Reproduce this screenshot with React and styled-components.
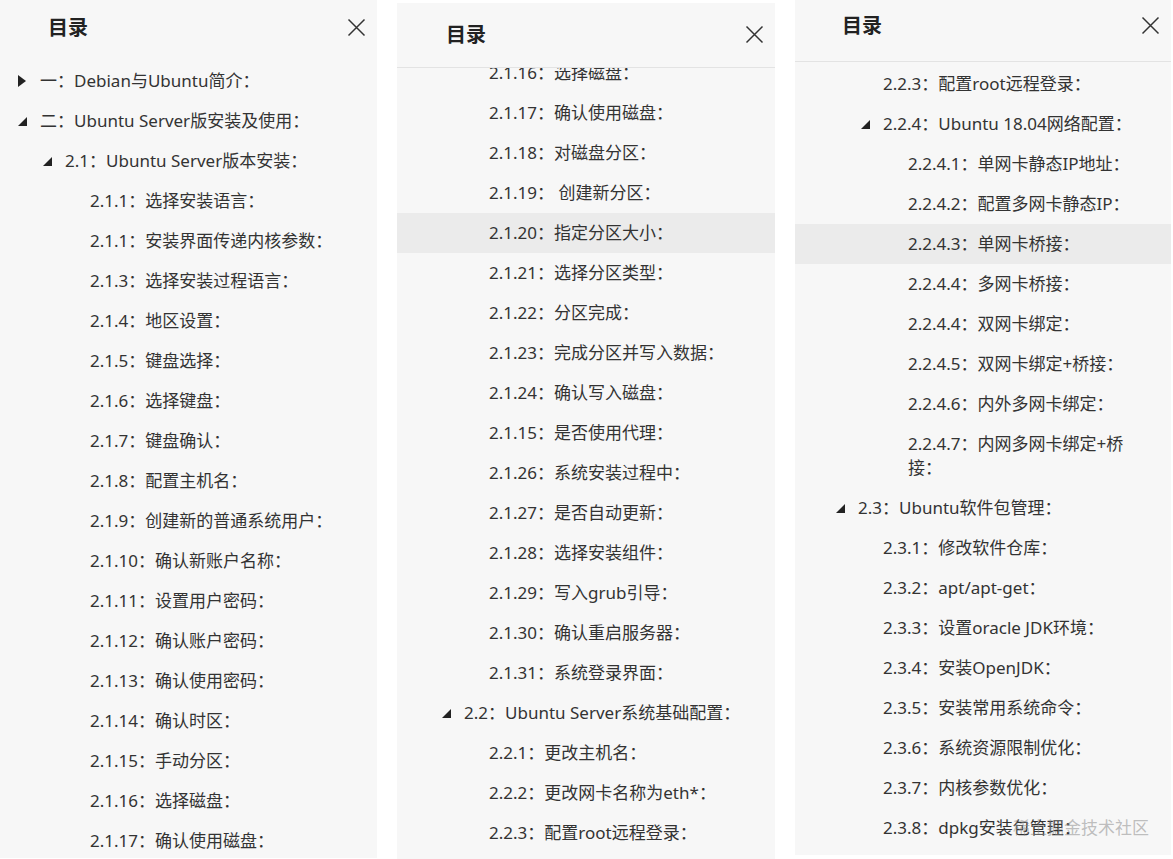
import React, { useLayoutEffect, useRef } from 'react'
import styled, { createGlobalStyle } from 'styled-components'

const GlobalStyle = createGlobalStyle`
  html, body {
    margin: 0;
    padding: 0;
    background: #ffffff;
  }
  body {
    font-family: 'Noto Sans', 'Noto Sans CJK SC', sans-serif;
    color: #333;
  }
`

const Page = styled.div`
  display: flex;
  align-items: flex-start;
  gap: 20px;
  width: 1173px;
  height: 859px;
  overflow: hidden;
`

const Panel = styled.div`
  position: relative;
  display: flex;
  flex-direction: column;
  flex: none;
  width: ${p => p.$width}px;
  height: ${p => p.$height}px;
  margin-top: ${p => p.$top}px;
  background: #f7f7f7;
  overflow: hidden;
`

const Header = styled.div`
  flex: none;
  display: flex;
  align-items: center;
  justify-content: space-between;
  box-sizing: border-box;
  height: ${p => p.$height}px;
  padding: 0 9px 0 ${p => p.$titleLeft}px;
  border-bottom: 1px solid ${p => (p.$divider ? '#e3e3e3' : 'transparent')};
`

const Title = styled.h2`
  margin: 0;
  margin-top: ${p => p.$shift}px;
  font-family: 'Noto Sans CJK SC', sans-serif;
  font-size: 20px;
  font-weight: 700;
  color: #222;
`

const CloseButton = styled.button`
  display: flex;
  align-items: center;
  justify-content: center;
  width: 24px;
  height: 24px;
  margin-top: ${p => p.$shift}px;
  padding: 0;
  border: none;
  background: none;
  cursor: pointer;
`

const List = styled.ul`
  flex: 1;
  margin: 0;
  padding: 0 0 60px 0;
  list-style: none;
  overflow: hidden;
`

const Row = styled.li`
  position: relative;
  display: flex;
  box-sizing: border-box;
  min-height: 40px;
  padding: 8px 30px 8px ${p => p.$indent}px;
  font-size: 17px;
  line-height: 24px;
  color: #333;
  background: ${p => (p.$active ? '#ebebeb' : 'transparent')};
`

const Toggle = styled.span`
  position: absolute;
  left: ${p => p.$indent - 23}px;
  top: 13px;
  width: 10px;
  height: 14px;
  display: flex;
  align-items: center;
  justify-content: center;
`

const Watermark = styled.div`
  position: absolute;
  right: 22px;
  bottom: 16px;
  font-family: 'Noto Sans CJK SC', sans-serif;
  font-size: 17px;
  color: rgba(140, 140, 140, 0.55);
  pointer-events: none;
`

const toc = [
  { lv: 1, t: '一：Debian与Ubuntu简介：', open: false },
  { lv: 1, t: '二：Ubuntu Server版安装及使用：', open: true },
  { lv: 2, t: '2.1：Ubuntu Server版本安装：', open: true },
  { lv: 3, t: '2.1.1：选择安装语言：' },
  { lv: 3, t: '2.1.1：安装界面传递内核参数：' },
  { lv: 3, t: '2.1.3：选择安装过程语言：' },
  { lv: 3, t: '2.1.4：地区设置：' },
  { lv: 3, t: '2.1.5：键盘选择：' },
  { lv: 3, t: '2.1.6：选择键盘：' },
  { lv: 3, t: '2.1.7：键盘确认：' },
  { lv: 3, t: '2.1.8：配置主机名：' },
  { lv: 3, t: '2.1.9：创建新的普通系统用户：' },
  { lv: 3, t: '2.1.10：确认新账户名称：' },
  { lv: 3, t: '2.1.11：设置用户密码：' },
  { lv: 3, t: '2.1.12：确认账户密码：' },
  { lv: 3, t: '2.1.13：确认使用密码：' },
  { lv: 3, t: '2.1.14：确认时区：' },
  { lv: 3, t: '2.1.15：手动分区：' },
  { lv: 3, t: '2.1.16：选择磁盘：' },
  { lv: 3, t: '2.1.17：确认使用磁盘：' },
  { lv: 3, t: '2.1.18：对磁盘分区：' },
  { lv: 3, t: '2.1.19： 创建新分区：' },
  { lv: 3, t: '2.1.20：指定分区大小：', id: 'p2' },
  { lv: 3, t: '2.1.21：选择分区类型：' },
  { lv: 3, t: '2.1.22：分区完成：' },
  { lv: 3, t: '2.1.23：完成分区并写入数据：' },
  { lv: 3, t: '2.1.24：确认写入磁盘：' },
  { lv: 3, t: '2.1.15：是否使用代理：' },
  { lv: 3, t: '2.1.26：系统安装过程中：' },
  { lv: 3, t: '2.1.27：是否自动更新：' },
  { lv: 3, t: '2.1.28：选择安装组件：' },
  { lv: 3, t: '2.1.29：写入grub引导：' },
  { lv: 3, t: '2.1.30：确认重启服务器：' },
  { lv: 3, t: '2.1.31：系统登录界面：' },
  { lv: 2, t: '2.2：Ubuntu Server系统基础配置：', open: true },
  { lv: 3, t: '2.2.1：更改主机名：' },
  { lv: 3, t: '2.2.2：更改网卡名称为eth*：' },
  { lv: 3, t: '2.2.3：配置root远程登录：' },
  { lv: 3, t: '2.2.4：Ubuntu 18.04网络配置：', open: true },
  { lv: 4, t: '2.2.4.1：单网卡静态IP地址：' },
  { lv: 4, t: '2.2.4.2：配置多网卡静态IP：' },
  { lv: 4, t: '2.2.4.3：单网卡桥接：', id: 'p3' },
  { lv: 4, t: '2.2.4.4：多网卡桥接：' },
  { lv: 4, t: '2.2.4.4：双网卡绑定：' },
  { lv: 4, t: '2.2.4.5：双网卡绑定+桥接：' },
  { lv: 4, t: '2.2.4.6：内外多网卡绑定：' },
  { lv: 4, t: '2.2.4.7：内网多网卡绑定+桥接：' },
  { lv: 2, t: '2.3：Ubuntu软件包管理：', open: true },
  { lv: 3, t: '2.3.1：修改软件仓库：' },
  { lv: 3, t: '2.3.2：apt/apt-get：' },
  { lv: 3, t: '2.3.3：设置oracle JDK环境：' },
  { lv: 3, t: '2.3.4：安装OpenJDK：' },
  { lv: 3, t: '2.3.5：安装常用系统命令：' },
  { lv: 3, t: '2.3.6：系统资源限制优化：' },
  { lv: 3, t: '2.3.7：内核参数优化：' },
  { lv: 3, t: '2.3.8：dpkg安装包管理：' },
]

const panels = [
  { width: 377, height: 858, top: 0, header: 61, titleLeft: 48, titleShift: -7, closeShift: -6, divider: false, base: 40, scroll: 0, active: null },
  { width: 378, height: 856, top: 3, header: 65, titleLeft: 49, titleShift: -3, closeShift: -1, divider: true, base: 42, scroll: 735, active: 'p2' },
  { width: 376, height: 855, top: 0, header: 62, titleLeft: 47, titleShift: -13, closeShift: -10, divider: true, base: 38, scroll: 1478, active: 'p3', watermark: true },
]

const CloseIcon = () => (
  <svg width="19" height="19" viewBox="0 0 19 19">
    <path d="M1.5 1.5 L17.5 17.5 M17.5 1.5 L1.5 17.5" stroke="#333" strokeWidth="1.5" fill="none" />
  </svg>
)

const Caret = ({ open }) =>
  open ? (
    <svg width="9" height="9" viewBox="0 0 9 9">
      <path d="M9 0 L9 9 L0 9 Z" fill="#222" />
    </svg>
  ) : (
    <svg width="8" height="12" viewBox="0 0 8 12">
      <path d="M0 0 L8 6 L0 12 Z" fill="#222" />
    </svg>
  )

const TocPanel = ({ cfg }) => {
  const listRef = useRef(null)

  useLayoutEffect(() => {
    if (listRef.current) listRef.current.scrollTop = cfg.scroll
  }, [cfg.scroll])

  return (
    <Panel $width={cfg.width} $height={cfg.height} $top={cfg.top}>
      <Header $height={cfg.header} $titleLeft={cfg.titleLeft} $divider={cfg.divider}>
        <Title $shift={cfg.titleShift}>目录</Title>
        <CloseButton $shift={cfg.closeShift} aria-label="关闭">
          <CloseIcon />
        </CloseButton>
      </Header>
      <List ref={listRef}>
        {toc.map((item, i) => {
          const indent = cfg.base + 25 * (item.lv - 1)
          return (
            <Row key={i} $indent={indent} $active={item.id && item.id === cfg.active}>
              {item.open !== undefined && (
                <Toggle $indent={indent}>
                  <Caret open={item.open} />
                </Toggle>
              )}
              {item.t}
            </Row>
          )
        })}
      </List>
      {cfg.watermark && <Watermark>稀土掘金技术社区</Watermark>}
    </Panel>
  )
}

export default function App() {
  return (
    <>
      <GlobalStyle />
      <Page>
        {panels.map((cfg, i) => (
          <TocPanel key={i} cfg={cfg} />
        ))}
      </Page>
    </>
  )
}
